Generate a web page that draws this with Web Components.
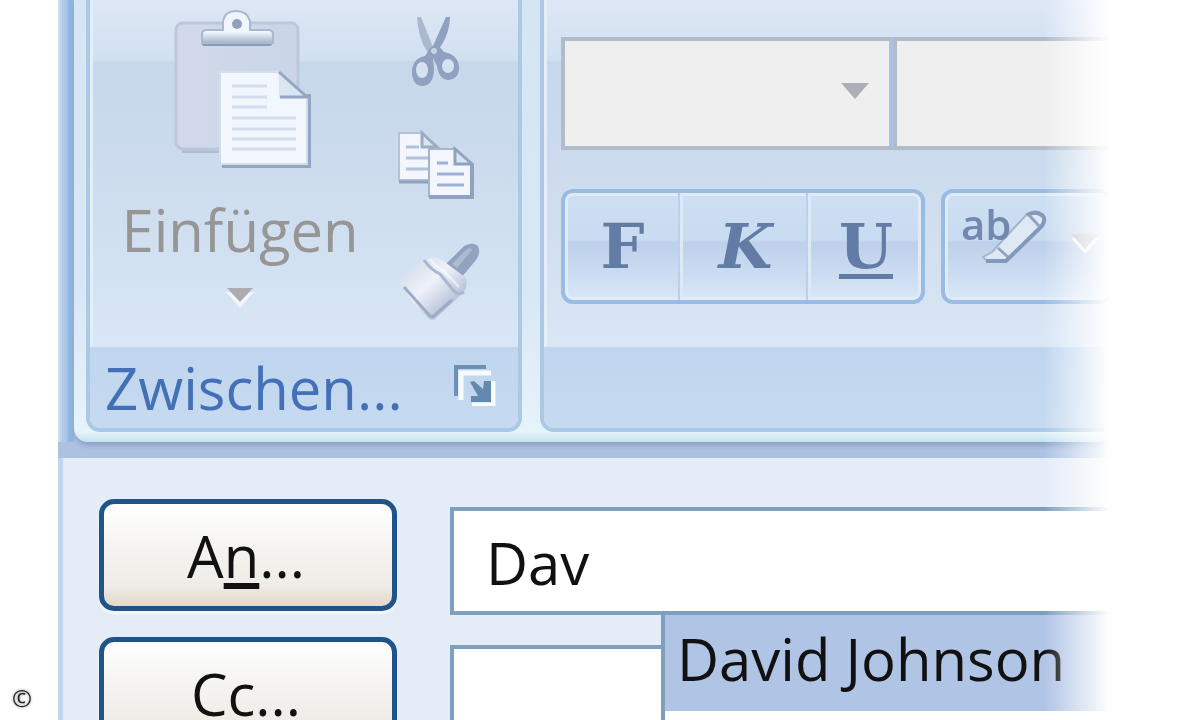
<!DOCTYPE html>
<html lang="de">
<head>
<meta charset="utf-8">
<title>Neue Nachricht</title>
<style>
  body {
    margin: 0;
    background: #fff;
    font-family: "Open Sans", "Noto Sans", sans-serif;
    font-size: 58px;
    font-weight: 500;
    line-height: 72px;
    color: #111;
  }
</style>
</head>
<body>
<mail-window>
  <mail-ribbon slot="ribbon">
    <ribbon-group label="Zwischen..." launcher>
      <clipboard-tools></clipboard-tools>
    </ribbon-group>
    <ribbon-group class="wide">
      <font-tools></font-tools>
    </ribbon-group>
  </mail-ribbon>
  <recipient-row value="Dav" name="An">A<u>n</u>...
    <suggestion-list slot="suggestions">David Johnson</suggestion-list>
  </recipient-row>
  <recipient-row name="Cc">Cc...</recipient-row>
</mail-window>
<copyright-mark>©</copyright-mark>

<script>
class MailWindow extends HTMLElement {
  constructor() {
    super();
    this.attachShadow({ mode: 'open' });
  }

  connectedCallback() {
    this.shadowRoot.innerHTML = `
      <style>
        :host {
          display: block;
          height: 100vh;
          overflow: hidden;
          margin: 0 84px 0 58px;
          background: linear-gradient(90deg, #d3e3f4 0, #b3cceb 4px, #abc8e8 8px, #8fb5e1 11px, #8fb5e1 16px, #adc2e3 16px);
          -webkit-mask-image: linear-gradient(90deg, #000 calc(100% - 72px), transparent calc(100% - 6px));
          mask-image: linear-gradient(90deg, #000 calc(100% - 72px), transparent calc(100% - 6px));
        }
        .form {
          display: flex;
          flex-direction: column;
          gap: 22px;
          padding: 41px 0 0 36px;
          border-left: 5px solid #bdd5ef;
          background: #e3ecf7;
          min-height: 100vh;
        }
      </style>
      <slot name="ribbon"></slot>
      <div class="form"><slot></slot></div>
    `;
  }
}
customElements.define('mail-window', MailWindow);

class MailRibbon extends HTMLElement {
  constructor() {
    super();
    this.attachShadow({ mode: 'open' });
  }

  connectedCallback() {
    this.shadowRoot.innerHTML = `
      <style>
        :host {
          display: block;
          padding: 0 0 16px 16px;
          background: linear-gradient(#adc2e3, #adc2e3) bottom / 100% 16px no-repeat;
        }
        .bar {
          display: flex;
          gap: 18px;
          padding: 0 0 10px 12px;
          border-bottom-left-radius: 14px;
          background: linear-gradient(#d6e5f4, #d9e8f6 300px, #e6f3fa 432px, #c5e2f0);
          box-shadow: 0 4px 4px #8fa6c8;
        }
        ::slotted(.wide) {
          flex: 1;
        }
      </style>
      <div class="bar"><slot></slot></div>
    `;
  }
}
customElements.define('mail-ribbon', MailRibbon);

class RibbonGroup extends HTMLElement {
  constructor() {
    super();
    this.attachShadow({ mode: 'open' });
  }

  connectedCallback() {
    const label = this.getAttribute('label') || '';
    const launcher = this.hasAttribute('launcher') ? `
      <button type="button" aria-label="Dialog öffnen">
        <svg width="44" height="44" viewBox="0 0 44 44">
          <path d="M6 35V8H36" transform="translate(3 3)" fill="none" stroke="#f7fbff" stroke-width="5"/>
          <path d="M4 34V5H34" fill="none" stroke="#6c91b6" stroke-width="4"/>
          <path d="M41 19V43H20" fill="none" stroke="#f7fbff" stroke-width="5"/>
          <path d="M18 20l4-1 9 8 1-8h7v21H19v-6h7z" fill="#6489ae"/>
        </svg>
      </button>` : '';
    this.shadowRoot.innerHTML = `
      <style>
        :host {
          display: block;
          box-sizing: border-box;
          height: 432px;
          border: 4px solid #abc9e5;
          border-top: 0;
          border-radius: 0 0 14px 14px;
          overflow: hidden;
          background: linear-gradient(#dee7f5, #d1e0f1 60px, #c6d8eb 62px, #cbdbed 160px, #d8e6f5 340px);
          box-shadow: inset 3px 0 0 #e4eef9;
        }
        .body {
          height: 347px;
        }
        .footer {
          display: flex;
          align-items: center;
          justify-content: space-between;
          height: 81px;
          padding: 0 22px 0 15px;
          background: linear-gradient(#c0d6ee, #c6daf0);
          color: #4470b8;
        }
        button {
          display: flex;
          padding: 0;
          margin-bottom: 8px;
          border: 0;
          background: none;
        }
      </style>
      <div class="body"><slot></slot></div>
      <div class="footer"><span>${label}</span>${launcher}</div>
    `;
  }
}
customElements.define('ribbon-group', RibbonGroup);

class ClipboardTools extends HTMLElement {
  constructor() {
    super();
    this.attachShadow({ mode: 'open' });
  }

  connectedCallback() {
    this.shadowRoot.innerHTML = `
      <style>
        :host {
          display: flex;
          height: 100%;
          padding-right: 34px;
        }
        button {
          display: block;
          padding: 0;
          border: 0;
          background: none;
          font: inherit;
          color: #969696;
        }
        svg {
          display: block;
        }
        .paste {
          display: flex;
          flex-direction: column;
          align-items: center;
          width: 300px;
          padding-top: 6px;
        }
        .paste span {
          margin-top: 22px;
        }
        .paste .arrow {
          margin-top: 20px;
        }
        .tools {
          display: flex;
          flex-direction: column;
          gap: 36px;
          padding-top: 12px;
        }
      </style>
      <button class="paste" type="button">
        <svg width="144" height="166" viewBox="-2 0 144 166">
          <defs>
            <linearGradient id="clip" x1="0" y1="0" x2="0" y2="1">
              <stop offset="0" stop-color="#eef4fb"/>
              <stop offset=".65" stop-color="#f2f7fc"/>
              <stop offset="1" stop-color="#a3b3cc"/>
            </linearGradient>
            <linearGradient id="board" x1="0" y1="0" x2="1" y2="0">
              <stop offset="0" stop-color="#d3d9ea"/>
              <stop offset=".5" stop-color="#cdd7e9"/>
              <stop offset="1" stop-color="#cbd5e8"/>
            </linearGradient>
          </defs>
          <path d="M12 145H50" stroke="#b0bed5" stroke-width="4"/>
          <rect x="6" y="17" width="122" height="126" rx="7" fill="url(#board)" stroke="#bbc7dc" stroke-width="3"/>
          <path d="M34 38H100" stroke="#8a9cb9" stroke-width="4" stroke-linecap="round"/>
          <path d="M32 37V28q0-4 5-4H53V15q2-10 13-10t14 10v9H98q5 0 5 4v9z" fill="url(#clip)" stroke="#a9b9d0" stroke-width="2"/>
          <circle cx="67" cy="18" r="5" fill="#8fa1bd"/>
          <path d="M52 160H139V88" fill="none" stroke="#94a6c2" stroke-width="4"/>
          <path d="M50 66H109L137 92V158H50z" fill="#f2f7fd" stroke="#d3deed" stroke-width="2"/>
          <path d="M109 66V91H137z" fill="#dbe5f2"/>
          <path d="M109 66L137 91H110" fill="none" stroke="#94a6c2" stroke-width="3"/>
          <path d="M62 80H97M62 91H97M62 101H97M62 112H126M62 123H126M62 133H126M62 143H126" stroke="#d2deee" stroke-width="3"/>
        </svg>
        <span>Einfügen</span>
        <svg class="arrow" width="32" height="22" viewBox="0 0 32 22">
          <path d="M2 6h28L16 22z" fill="#f3f5f8"/>
          <path d="M3 2h26L16 16z" fill="#aaacb2"/>
        </svg>
      </button>
      <div class="tools">
        <button type="button" aria-label="Ausschneiden">
          <svg width="84" height="78" viewBox="0 0 84 78">
            <path d="M27 5l4 0 12 30-5 6q-10-15-11-36z" fill="#a9b9d0"/>
            <path d="M60 5l-4 0-14 31 2 6q15-14 16-37z" fill="#8fa1bf"/>
            <path d="M41 35l-6 9q-12 2-13 15 0 15 11 15 11-1 11-18l-1-10 4 8q2 14 12 14 11-2 10-14-2-12-15-14l-6-7z" fill="#8fa1bf"/>
            <ellipse cx="32" cy="58" rx="6" ry="8" fill="#d5e2f2"/>
            <ellipse cx="58" cy="54" rx="6" ry="7" fill="#d5e2f2"/>
            <circle cx="44" cy="39" r="3" fill="#c8d4e5"/>
          </svg>
        </button>
        <button type="button" aria-label="Kopieren">
          <svg width="84" height="78" viewBox="0 0 84 78">
            <path d="M9 7H32L47 21V54H9z" fill="#f3f7fd" stroke="#b4c2d8" stroke-width="2"/>
            <path d="M9 56H40" stroke="#8fa2c0" stroke-width="3"/>
            <path d="M32 7V21H47z" fill="#dae5f2" stroke="#9cadc8" stroke-width="3"/>
            <path d="M16 21H29M16 32H38M16 43H38" stroke="#b3c2dc" stroke-width="3"/>
            <path d="M39 23H65L82 39V70H39z" fill="#f3f7fd" stroke="#a5b5ce" stroke-width="2"/>
            <path d="M39 71H82V39" fill="none" stroke="#8fa2c0" stroke-width="4"/>
            <path d="M65 23V38H82z" fill="#dae5f2" stroke="#8fa2c0" stroke-width="3"/>
            <path d="M47 37H58M47 48H74M47 59H74" stroke="#a0b2d3" stroke-width="3"/>
          </svg>
        </button>
        <button type="button" aria-label="Format übertragen">
          <svg width="94" height="84" viewBox="0 0 94 84">
            <defs>
              <linearGradient id="hair" x1="0" y1="0" x2="1" y2="1">
                <stop offset="0" stop-color="#c9d4e4"/>
                <stop offset=".45" stop-color="#eef1f9"/>
                <stop offset="1" stop-color="#8d9fbe"/>
              </linearGradient>
            </defs>
            <path d="M56 24L74 6q9-5 14 0 3 7-2 14L71 38z" fill="#92a3c0"/>
            <path d="M62 24L77 9q4-2 5 1L67 28z" fill="#adbbd1"/>
            <path d="M7 39L34 20Q43 13 52 20L75 37Q79 43 74 52L45 79Q41 82 37 77 20 61 7 39z" fill="url(#hair)"/>
            <path d="M34 20Q41 30 50 34L63 50Q68 56 74 52" fill="none" stroke="#a9b7cf" stroke-width="3"/>
            <path d="M14 47L40 76Q43 78 47 73L62 60" fill="none" stroke="#9dacc6" stroke-width="3"/>
            <path d="M40 19Q47 28 54 31L69 47" fill="none" stroke="#fff" stroke-width="2" opacity=".6"/>
          </svg>
        </button>
      </div>
    `;
  }
}
customElements.define('clipboard-tools', ClipboardTools);

class FontTools extends HTMLElement {
  constructor() {
    super();
    this.attachShadow({ mode: 'open' });
  }

  connectedCallback() {
    this.shadowRoot.innerHTML = `
      <style>
        :host {
          display: flex;
          flex-direction: column;
          gap: 39px;
          padding: 37px 0 0 17px;
        }
        .row {
          display: flex;
        }
        .combo {
          display: grid;
          align-items: center;
          justify-items: end;
        }
        .combo > * {
          grid-area: 1 / 1;
        }
        .combo svg {
          margin: 0 24px 6px 0;
          pointer-events: none;
        }
        .family {
          width: 332px;
        }
        .size {
          flex: 1;
        }
        select {
          appearance: none;
          box-sizing: border-box;
          width: 100%;
          height: 113px;
          margin: 0;
          border: 4px solid #b2bcc8;
          border-right-color: #a9c2e3;
          border-radius: 0;
          background: #efefef;
          opacity: 1;
        }
        .buttons {
          display: grid;
          box-sizing: border-box;
          height: 115px;
          border: 4px solid #9abbe2;
          border-radius: 12px;
          overflow: hidden;
          background: linear-gradient(#cedff2, #c9dbf0 44%, #bdd0ea 46%, #cbdcf1 75%, #d9e7f7);
          box-shadow: inset 0 0 0 3px #dfebf8;
        }
        .style {
          grid-template-columns: 118px 128px 1fr;
          width: 364px;
          margin-right: 16px;
        }
        .color {
          flex: 1;
        }
        button {
          padding: 0;
          border: 0;
          background: none;
          color: #637ca5;
          font: bold 62px/62px "DejaVu Serif", serif;
        }
        .style button {
          border-right: 3px solid #dde9f7;
          box-shadow: inset -2px 0 0 #bdd0e9;
        }
        .style button:last-child {
          border: 0;
          box-shadow: none;
        }
        .italic {
          font-style: italic;
        }
        .under {
          text-decoration: underline;
          text-decoration-thickness: 5px;
          text-underline-offset: 6px;
        }
        .color button {
          display: flex;
          align-items: center;
          gap: 26px;
          padding: 0 0 28px 16px;
        }
        .color svg {
          flex: none;
          overflow: visible;
        }
        .color .arrow {
          margin-top: 18px;
        }
      </style>
      <div class="row">
        <div class="combo family">
          <select aria-label="Schriftart" disabled><option></option></select>
          <svg width="28" height="16" viewBox="0 0 28 16"><path d="M0 0h28L14 16z" fill="#adafb4"/></svg>
        </div>
        <div class="combo size">
          <select aria-label="Schriftgrad" disabled><option></option></select>
        </div>
      </div>
      <div class="row">
        <div class="buttons style">
          <button type="button">F</button>
          <button type="button" class="italic">K</button>
          <button type="button" class="under">U</button>
        </div>
        <div class="buttons color">
          <button type="button" aria-label="Texthervorhebung">
            <svg width="84" height="64" viewBox="0 0 84 64">
              <path d="M31 51L66 13q10-6 16 2 1 6-4 12L48 57q-9 6-23 2l-3-3z" fill="#dfe9f5" stroke="#a4b5d0" stroke-width="2"/>
              <path d="M25 60H45L81 25q4-6 1-10-6-6-16-1" fill="none" stroke="#8398ba" stroke-width="4"/>
              <path d="M68 14l10 11M37 47l10 9" stroke="#91a4c2" stroke-width="3"/>
              <text x="0" y="39" font-family="Open Sans, sans-serif" font-size="42" font-weight="600" fill="#7189b0">ab</text>
            </svg>
            <svg class="arrow" width="28" height="24" viewBox="0 0 28 24"><path d="M0 8h28L14 24z" fill="#f3f5f8"/><path d="M0 4h28L14 19z" fill="#c4c6cb"/></svg>
          </button>
        </div>
      </div>
    `;
  }
}
customElements.define('font-tools', FontTools);

class RecipientRow extends HTMLElement {
  constructor() {
    super();
    this.attachShadow({ mode: 'open' });
  }

  connectedCallback() {
    const name = this.getAttribute('name');
    const value = this.getAttribute('value') || '';
    this.shadowRoot.innerHTML = `
      <style>
        :host {
          display: flex;
          gap: 53px;
          height: 116px;
        }
        button {
          box-sizing: border-box;
          width: 298px;
          height: 112px;
          padding: 2px 4px 0 0;
          border: 5px solid #205488;
          border-radius: 15px;
          background: linear-gradient(#fff, #f4f3ef 45%, #efece6 80%, #e2d8cb);
          box-shadow: 0 3px 2px #f3f6fb;
          color: inherit;
          font: inherit;
        }
        ::slotted(u) {
          text-decoration-thickness: 6px;
          text-underline-offset: 5px;
          text-decoration-skip-ink: none;
        }
        .field {
          position: relative;
          flex: 1;
          padding-top: 8px;
        }
        input {
          display: block;
          box-sizing: border-box;
          width: 100%;
          height: 108px;
          margin: 0;
          padding: 2px 0 0 32px;
          border: 4px solid #7f9fbe;
          border-radius: 0;
          outline: 0;
          background: #fff;
          color: inherit;
          font: inherit;
        }
      </style>
      <button type="button"><slot></slot></button>
      <div class="field">
        <input type="text" aria-label="${name}" value="${value}">
        <slot name="suggestions"></slot>
      </div>
    `;
  }
}
customElements.define('recipient-row', RecipientRow);

class SuggestionList extends HTMLElement {
  constructor() {
    super();
    this.attachShadow({ mode: 'open' });
  }

  connectedCallback() {
    this.shadowRoot.innerHTML = `
      <style>
        :host {
          position: absolute;
          z-index: 1;
          top: 112px;
          left: 211px;
          right: 0;
          height: 160px;
          border: 4px solid #7f9fbe;
          background: #fff;
          white-space: nowrap;
        }
        .item {
          padding: 8px 0 16px 12px;
          background: #b0c4e5;
        }
      </style>
      <div role="listbox" aria-label="Vorschläge">
        <div class="item" role="option" aria-selected="true"><slot></slot></div>
      </div>
    `;
  }
}
customElements.define('suggestion-list', SuggestionList);

class CopyrightMark extends HTMLElement {
  constructor() {
    super();
    this.attachShadow({ mode: 'open' });
  }

  connectedCallback() {
    this.shadowRoot.innerHTML = `
      <style>
        :host {
          position: fixed;
          left: 12px;
          bottom: 10px;
          font: 24px/24px "Open Sans", sans-serif;
          color: #222;
          text-shadow: 0 0 3px #888;
        }
      </style>
      <slot></slot>
    `;
  }
}
customElements.define('copyright-mark', CopyrightMark);
</script>
</body>
</html>
